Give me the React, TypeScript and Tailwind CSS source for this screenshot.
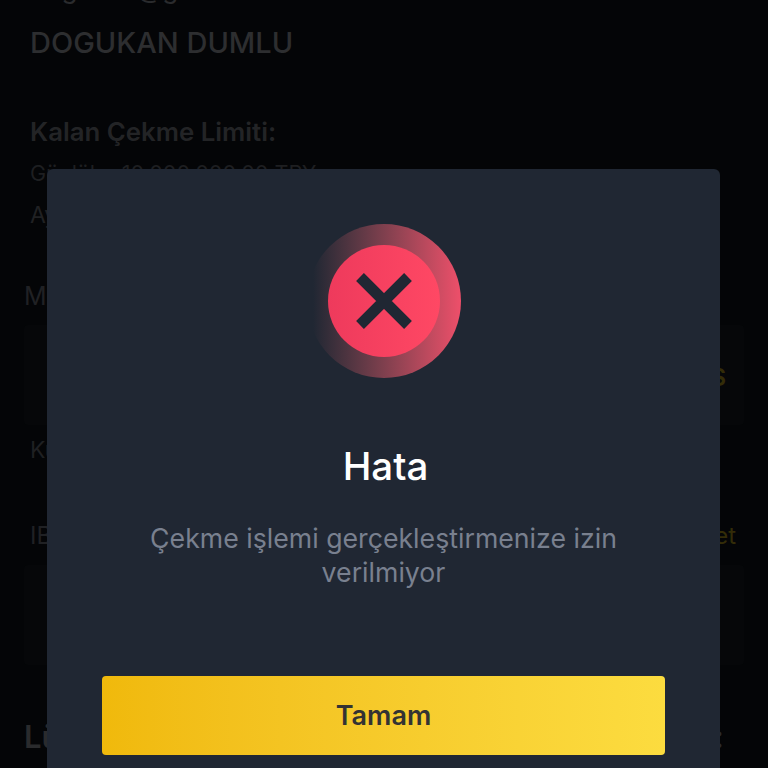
import React from "react";

const Background = () => {
  return (
    <div className="h-[768px] overflow-hidden bg-[#040507] font-['Inter',sans-serif] text-[#2a2b2d]">
      <div className="-mt-[26px] px-[30px] text-[26px] leading-[30px]">dogukan@gmail.com</div>
      <div className="mt-[19px] px-[30px] text-[29px] font-medium leading-[40px] text-[#2d2e30]">
        DOGUKAN DUMLU
      </div>
      <div className="mt-[49px] px-[30px] text-[25.8px] font-semibold leading-[40px] text-[#232426]">
        Kalan Çekme Limiti:
      </div>
      <div className="mt-[1px] flex gap-[14px] px-[30px] text-[21.6px] leading-[40px] text-[#1e1f21]">
        <span>Günlük:</span>
        <span>10.000.000,00 TRY</span>
      </div>
      <div className="mt-[2px] px-[30px] text-[23px] leading-[40px] text-[#202123]">Aylık</div>
      <div className="mt-[41px] px-[24px] text-[25px] leading-[40px] text-[#202124]">Miktar</div>
      <div className="mx-[24px] mt-[9px] flex h-[100px] items-center justify-end rounded bg-[#060709] px-[18px] pt-[6px] text-[24px] font-semibold text-[#332c08]">
        TÜMÜ S
      </div>
      <div className="mt-[5px] px-[30px] text-[23px] leading-[40px] text-[#1f2022]">Kullanılabilir</div>
      <div className="mt-[46px] flex items-center justify-between pl-[30px] pr-[32px] text-[24px] leading-[40px]">
        <span className="text-[#202124]">IBAN</span>
        <span className="text-[#332c08]">Ekle Iset</span>
      </div>
      <div className="mx-[24px] mt-[9px] h-[100px] rounded bg-[#060709]"></div>
      <div className="mt-[52px] flex items-center justify-between pl-[24px] pr-[44px] text-[31px] font-semibold leading-[40px] text-[#2a2b2d]">
        <span>Lütfen</span>
        <span>:</span>
      </div>
    </div>
  );
};

const ErrorIcon = () => {
  return (
    <div className="flex h-[154px] w-[154px] items-center justify-center rounded-full bg-gradient-to-r from-[#202733] from-[4%] to-[#ee4f6a]">
      <div className="flex h-[112px] w-[112px] items-center justify-center rounded-full bg-gradient-to-r from-[#ee3a5c] to-[#ff4864]">
        <svg width="64" height="64" viewBox="0 0 64 64" fill="none">
          <path d="M8 8 L56 56 M56 8 L8 56" stroke="#202733" strokeWidth="11" />
        </svg>
      </div>
    </div>
  );
};

export default function App() {
  return (
    <div className="relative h-[768px] overflow-hidden">
      <Background />
      <div className="absolute left-[47px] top-[169px] flex h-[620px] w-[673px] flex-col items-center rounded-t-[6px] bg-[#202733] pt-[55px] font-['Inter',sans-serif]">
        <ErrorIcon />
        <h1 className="ml-[4px] mt-[64px] text-[38.5px] font-medium leading-[48px] text-white">Hata</h1>
        <p className="mt-[31px] w-[520px] text-center text-[26.7px] leading-[34px] text-[#79808f]">
          Çekme işlemi gerçekleştirmenize izin verilmiyor
        </p>
        <button className="mt-[87px] h-[79px] w-[563px] rounded-[4px] bg-gradient-to-r from-[#f0b90b] to-[#fcdc3f] pt-[1px] text-[27px] font-semibold text-[#333333]">
          Tamam
        </button>
      </div>
    </div>
  );
}
